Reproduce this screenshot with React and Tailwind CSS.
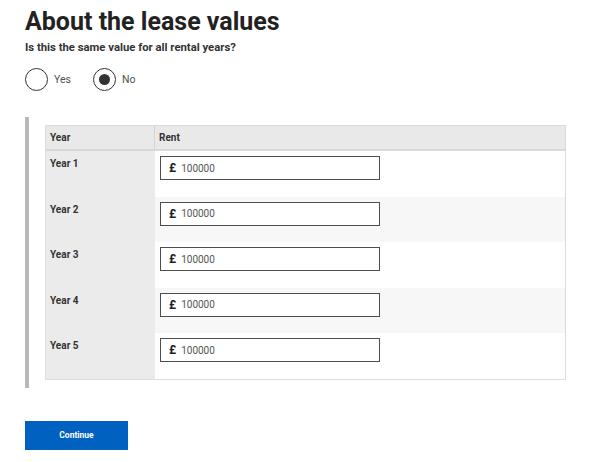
import React from 'react'

const years = [1, 2, 3, 4, 5]

function Radio({ label, checked }) {
  return (
    <label className="flex items-center gap-[6px]">
      <span className="flex h-[23px] w-[23px] items-center justify-center rounded-full border-[1.5px] border-[#333]">
        {checked && <span className="h-[11px] w-[11px] rounded-full bg-[#333]" />}
      </span>
      <span className="text-[10.5px] text-[#505050]">{label}</span>
    </label>
  )
}

export default function App() {
  return (
    <div className="min-h-[462px] bg-white pl-[25px] pt-[6px] font-['Roboto',sans-serif] text-[#222]">
      <h1 className="text-[25px] font-bold leading-[31px] text-[#222]">About the lease values</h1>
      <p className="mt-[3px] text-[11.3px] font-bold leading-[16px] text-[#333]">
        Is this the same value for all rental years?
      </p>

      <div className="mt-[12px] flex gap-[22px]">
        <Radio label="Yes" />
        <Radio label="No" checked />
      </div>

      <div className="mt-[26px] w-[541px] border-l-4 border-[#b8b8b8] py-2 pl-[16px]">
        <div className="border border-[#dcdcdc]">
          <div className="flex h-[25px] items-center border-b-2 border-[#d9d9d9] bg-[#e9e9e9] text-[10px] font-bold text-[#333]">
            <div className="flex h-full w-[109px] items-center border-r border-[#d4d4d4] pl-[4px]">Year</div>
            <div className="pl-[4px]">Rent</div>
          </div>
          {years.map((y) => (
            <div key={y} className="flex h-[45.6px]">
              <div className="w-[109px] bg-[#ebebeb] pl-[4px] pt-[5px] text-[10px] font-bold text-[#333]">
                Year {y}
              </div>
              <div className={`flex-1 pl-[5px] pt-[5px] ${y % 2 === 0 ? 'bg-[#f7f7f7]' : 'bg-white'}`}>
                <div className="flex h-[24px] w-[220px] items-center border-[1.5px] border-[#4d4d4d] bg-white pl-[8px]">
                  <span className="text-[12px] font-bold text-[#222]">£</span>
                  <span className="ml-[5px] text-[10px] text-[#555]">100000</span>
                </div>
              </div>
            </div>
          ))}
        </div>
      </div>

      <button className="mt-[33px] h-[29px] w-[103px] bg-[#0061c1] text-[8.5px] font-bold text-white">
        Continue
      </button>
    </div>
  )
}
